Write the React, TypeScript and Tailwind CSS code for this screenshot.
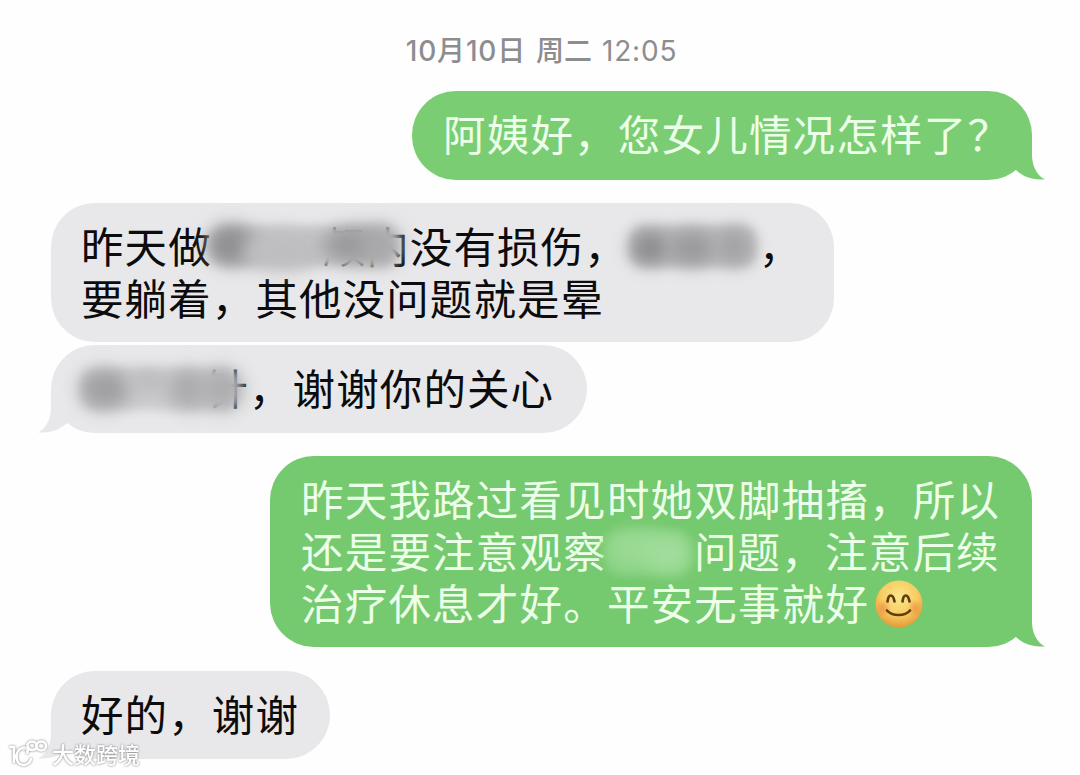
import React from 'react';
import clsx from 'clsx';

interface BubbleProps {
  side: 'left' | 'right';
  tailColor?: string;
  className?: string;
  children: React.ReactNode;
}

function Tail({ side, className }: { side: 'left' | 'right'; className: string }) {
  return (
    <svg
      width="45"
      height="50"
      viewBox="0 -10 45 50"
      className={clsx('absolute bottom-0', side === 'right' ? '-right-[13px]' : '-left-[13px] -scale-x-100', className)}
      fill="currentColor"
    >
      <path d="M32 -6V15C32 27 38 36.5 45 39.2C33 40.5 23 37 15.5 29.5L4 12V-6Z" />
    </svg>
  );
}

function Bubble({ side, tailColor, className, children }: BubbleProps) {
  return (
    <div
      className={clsx(
        'relative rounded-[44px] whitespace-nowrap text-[42.5px] leading-[52px]',
        side === 'right' ? 'self-end text-[#ecffe9] tracking-[1.2px]' : 'self-start bg-[#e8e8ea] text-[#0c0c0e] tracking-[1.1px]',
        className,
      )}
    >
      {tailColor && <Tail side={side} className={tailColor} />}
      <div className="relative">{children}</div>
    </div>
  );
}

interface Smudge {
  x: number;
  y: number;
  rx: number;
  ry: number;
  color: string;
}

// Blurred-out part of a line, sits over whatever text is left underneath
function Redacted({ base, smudges, className, children }: {
  base: Smudge;
  smudges: Smudge[];
  className: string;
  children?: React.ReactNode;
}) {
  return (
    <span className={clsx('relative inline-block h-[52px] align-top text-right', className)}>
      {children}
      <svg className="absolute inset-0 h-full w-full overflow-visible">
        <rect
          x={base.x - base.rx}
          y={base.y - base.ry}
          width={base.rx * 2}
          height={base.ry * 2}
          rx="14"
          fill={base.color}
          className="blur-[5px]"
        />
        {smudges.map((s, i) => (
          <ellipse key={i} cx={s.x} cy={s.y} rx={s.rx} ry={s.ry} fill={s.color} className="blur-[9px]" />
        ))}
      </svg>
    </span>
  );
}

function SmileEmoji() {
  return (
    <svg width="50" height="50" viewBox="0 0 50 50" className="ml-[5px] inline-block align-top">
      <defs>
        <radialGradient id="face" cx="0.5" cy="0.35" r="0.65">
          <stop offset="0" stopColor="#fbe68e" />
          <stop offset="0.6" stopColor="#f7cd60" />
          <stop offset="1" stopColor="#e39a38" />
        </radialGradient>
        <radialGradient id="cheek">
          <stop offset="0" stopColor="#ec8546" stopOpacity="0.65" />
          <stop offset="1" stopColor="#ec8546" stopOpacity="0" />
        </radialGradient>
      </defs>
      <circle cx="25" cy="25" r="23.5" fill="url(#face)" />
      <ellipse cx="9" cy="29" rx="8" ry="9" fill="url(#cheek)" />
      <ellipse cx="41" cy="29" rx="8" ry="9" fill="url(#cheek)" />
      <g fill="none" stroke="#5f3d0e" strokeLinecap="round" strokeWidth="2.7">
        <path d="M13.5 22.5C14.5 14.5 19 14.5 20.5 22.5" />
        <path d="M28.5 22.5C29.5 14.5 34 14.5 35.5 22.5" />
        <path d="M13 31.5C18 37.5 31 37.5 36 31.5" />
      </g>
    </svg>
  );
}

function Watermark() {
  return (
    <div className="absolute left-[8px] top-[739px] flex items-start text-white drop-shadow-[0_0_1px_#777]">
      <svg width="41" height="30" viewBox="0 0 41 30" fill="none" stroke="currentColor" strokeWidth="2.6" strokeLinecap="round">
        <path d="M2.500 8H6V23M14 9C7 11 6 25 15 26C20 26 22 24 23 20" />
        <circle cx="16" cy="9" r="0.8" />
        <path d="M19.500 14V7C19.500 1 28.500 1 28.500 7C28.500 12 21 12 20 8M28.500 7C28.500 1 38 1 38 7C38 13 28.500 13 28.500 7" />
      </svg>
      <span className="ml-[3px] text-[22px] leading-[32px] font-medium">大数跨境</span>
    </div>
  );
}

export default function App() {
  return (
    <main className="relative flex h-[775px] w-[1080px] flex-col overflow-hidden bg-[#fefefe] pl-[51px] pr-[48px] pt-[34px] font-['Inter','Noto_Sans_CJK_SC',sans-serif]">
      <time className="flex h-[34px] gap-[10px] self-center whitespace-nowrap text-[28px] leading-[34px] tracking-[0.8px] text-[#8d8d90]">
        <span className="font-medium">10月10日</span>
        <span className="font-medium tracking-normal">周二</span>
        <span>12:05</span>
      </time>

      <Bubble side="right" tailColor="text-[#7acd72]" className="mt-[23px] h-[89px] w-[620px] bg-[#7acd72] pl-[31px] pt-[19px]">
        阿姨好，您女儿情况怎样了？
      </Bubble>

      <Bubble side="left" className="mt-[23px] h-[139px] w-[783px] pl-[30px] pt-[19px]">
        <p>
          昨天做
          <Redacted
            className="w-[198px]"
            base={{ x: 92, y: 24, rx: 94, ry: 20, color: '#c6c6c8' }}
            smudges={[
              { x: 20, y: 23, rx: 25, ry: 20, color: '#8f8f91' },
              { x: 70, y: 29, rx: 40, ry: 20, color: '#bebec0' },
              { x: 140, y: 23, rx: 30, ry: 18, color: '#9a9a9c' },
              { x: 168, y: 23, rx: 20, ry: 20, color: '#a8a8aa' },
            ]}
          >
            颅内
          </Redacted>
          没有损伤，
          <Redacted
            className="w-[131px]"
            base={{ x: 65, y: 24, rx: 63, ry: 21, color: '#c0c0c2' }}
            smudges={[
              { x: 22, y: 26, rx: 20, ry: 17, color: '#8d8d8f' },
              { x: 64, y: 26, rx: 24, ry: 18, color: '#9a9a9c' },
              { x: 106, y: 25, rx: 19, ry: 19, color: '#a3a3a5' },
            ]}
          />
          ，
        </p>
        <p>要躺着，其他没问题就是晕</p>
      </Bubble>

      <Bubble side="left" tailColor="text-[#e8e8ea]" className="mt-[3px] h-[88px] w-[536px] pl-[30px] pt-[19px]">
        <Redacted
          className="w-[168px]"
          base={{ x: 78, y: 25, rx: 78, ry: 21, color: '#cdcdcf' }}
          smudges={[
            { x: 24, y: 25, rx: 25, ry: 20, color: '#a0a0a2' },
            { x: 67, y: 17, rx: 18, ry: 11, color: '#b9b9bb' },
            { x: 107, y: 25, rx: 21, ry: 20, color: '#acacae' },
            { x: 141, y: 25, rx: 21, ry: 21, color: '#adadaf' },
          ]}
        >
          针
        </Redacted>
        ，谢谢你的关心
      </Bubble>

      <Bubble side="right" tailColor="text-[#75c96e]" className="mt-[23px] h-[191px] w-[762px] bg-[#75c96e] pl-[31px] pt-[19px]">
        <p>昨天我路过看见时她双脚抽搐，所以</p>
        <p>
          还是要注意观察
          <Redacted
            className="w-[87px]"
            base={{ x: 40, y: 26, rx: 42, ry: 22, color: '#8bd385' }}
            smudges={[
              { x: 32, y: 21, rx: 30, ry: 18, color: '#9bda95' },
              { x: 62, y: 27, rx: 22, ry: 18, color: '#a2dd9c' },
            ]}
          />
          问题，注意后续
        </p>
        <p>
          治疗休息才好。平安无事就好
          <SmileEmoji />
        </p>
      </Bubble>

      <Bubble side="left" tailColor="text-[#e8e8ea]" className="mt-[24px] h-[88px] w-[279px] pl-[30px] pt-[19px]">
        好的，谢谢
      </Bubble>

      <Watermark />
    </main>
  );
}
